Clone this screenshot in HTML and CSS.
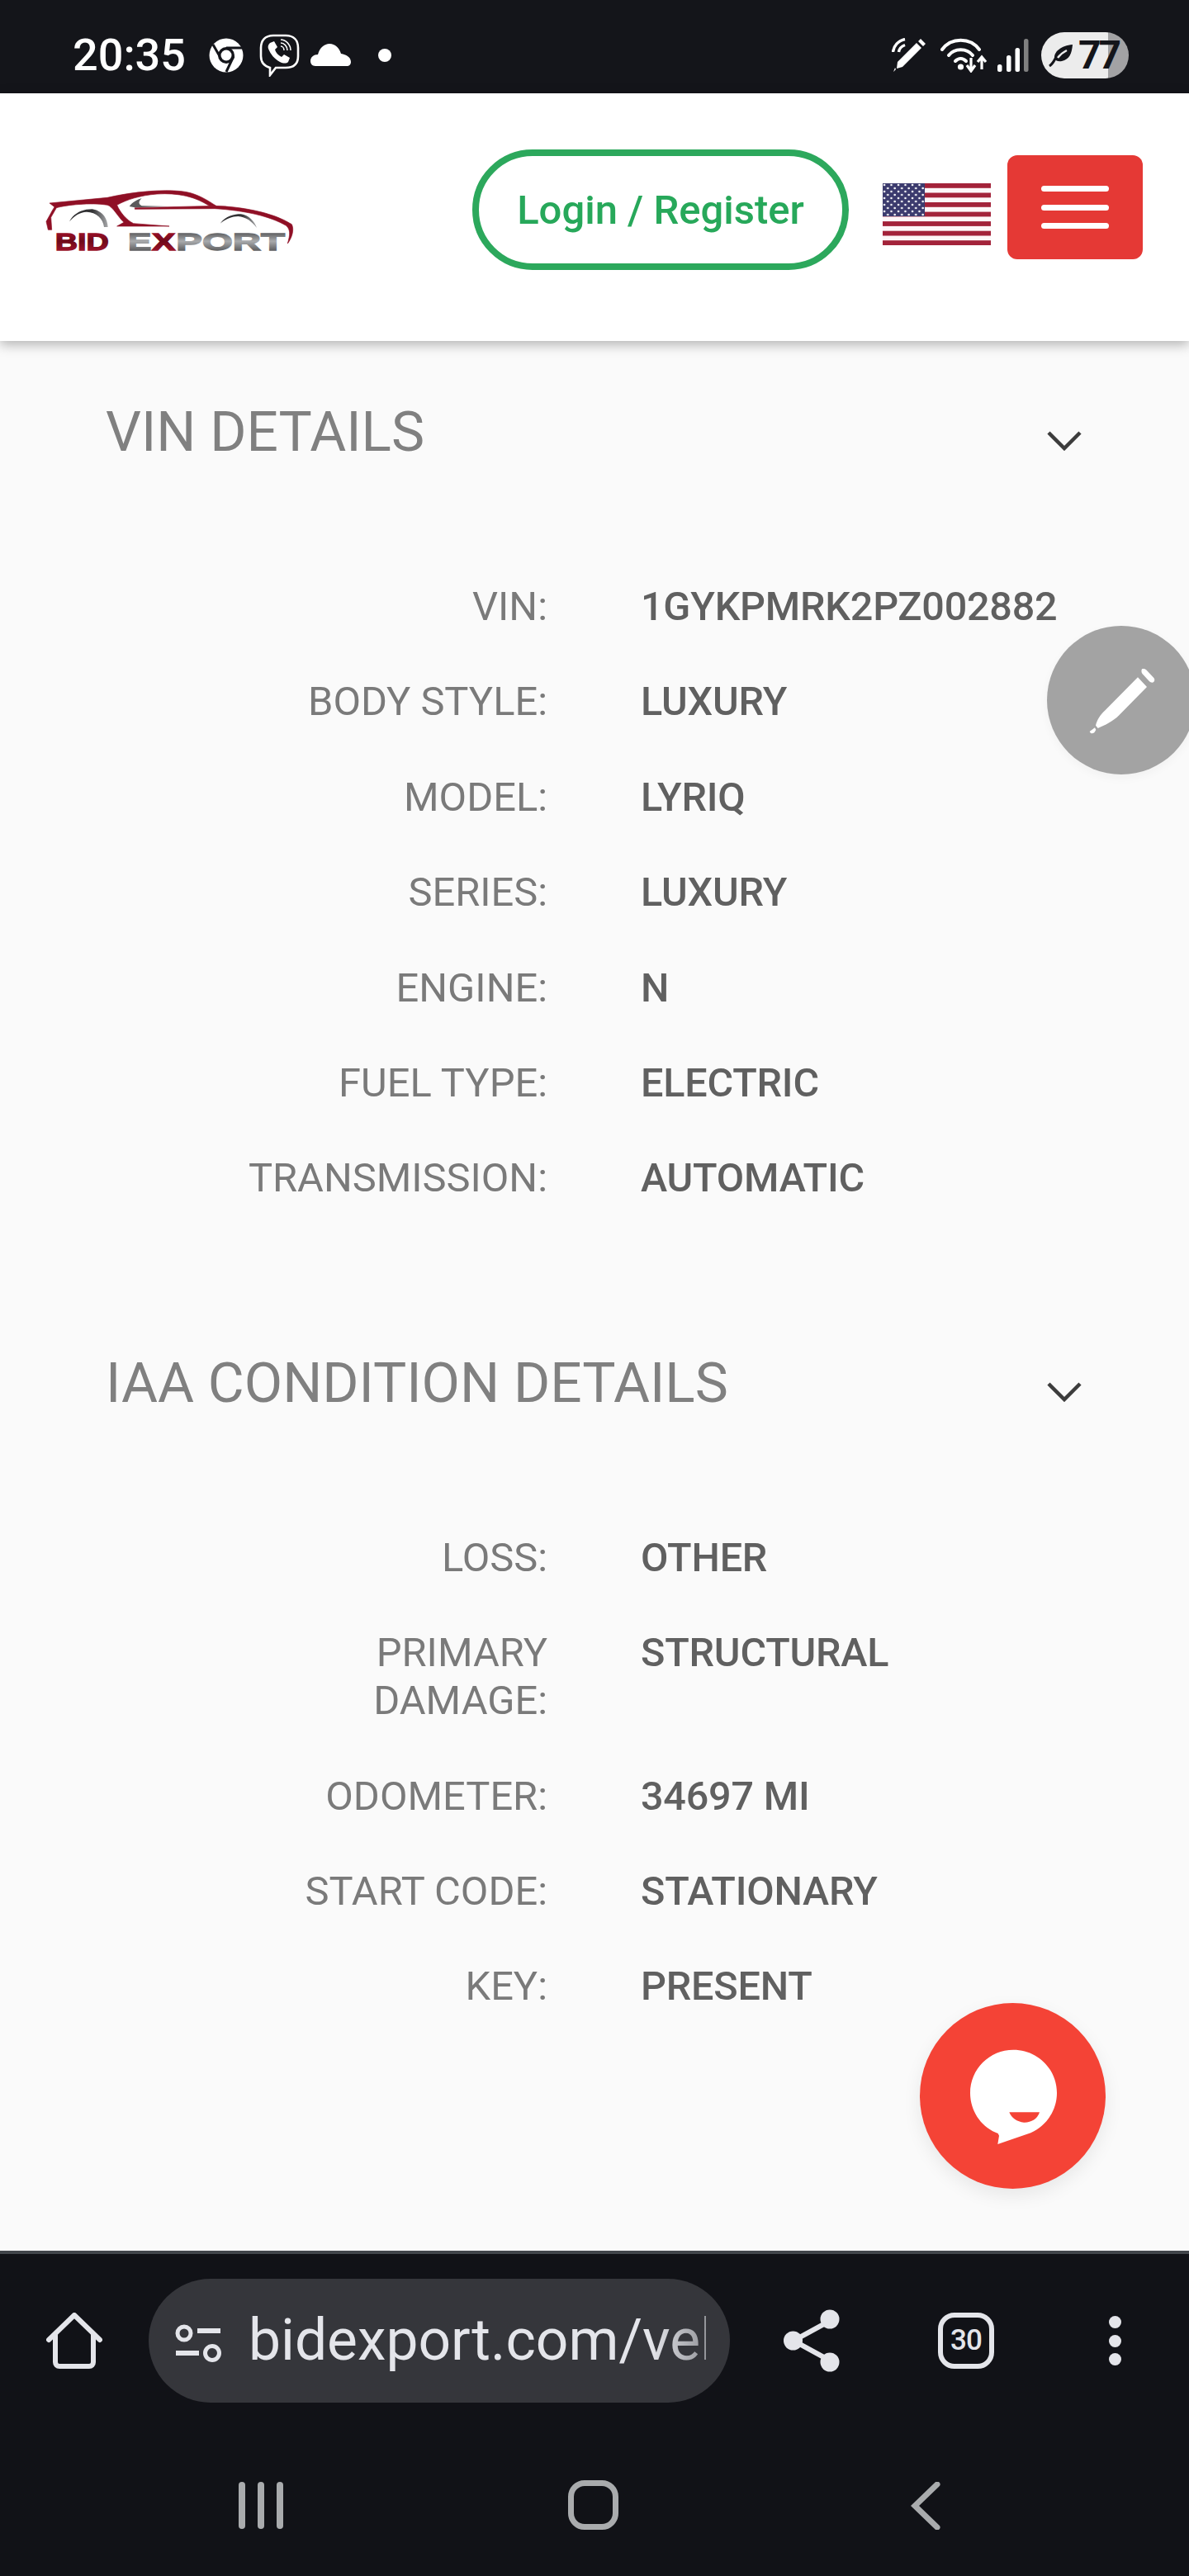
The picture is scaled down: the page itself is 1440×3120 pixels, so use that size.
FILE: index.html
```html
<!DOCTYPE html>
<html lang="en">
<head>
<meta charset="utf-8">
<title>Bid Export</title>
<link rel="stylesheet" href="styles.css">
</head>
<body>
<div class="phone">
  <div class="statusbar">
    <div class="status-left">
      <span class="clock">20:35</span>
      <svg class="ic-chrome" viewBox="0 0 42 42"><circle cx="21" cy="21" r="20.5" fill="#fff"/><circle cx="21" cy="21" r="10" fill="#14151a"/><circle cx="21" cy="21" r="6.500" fill="#fff"/><path d="M5 8 L13 22 M21 12 H42 M30 22 L21 41" stroke="#14151a" stroke-width="3" fill="none"/></svg>
      <svg class="ic-viber" viewBox="0 0 49 52"><path d="M17 2 H32 C42 2 47 8 47 17 V27 C47 36 42 41 32 41 H20 L13 50 V41 C6 39 2 35 2 27 V17 C2 8 7 2 17 2 Z" fill="none" stroke="#fff" stroke-width="2.600"/><path d="M13 11 L18 9 L22 16 L19 19 C20 23 23 26 27 28 L30 25 L37 29 L35 34 C33 36 29 36 25 34 C18 30 14 25 11 18 C10 15 11 13 13 11 Z" fill="#fff"/><path d="M26 7 C32 7 38 13 38 20 M26 11 C30 11 34 15 34 20 M26 15 C28 15 30 17 30 20" fill="none" stroke="#fff" stroke-width="1.500"/></svg>
      <svg class="ic-cloud" viewBox="0 0 49 27"><path d="M6 27 C2 27 0 24 0 21 C0 16 4 13 9 13 C11 5 17 0 23 0 C30 0 35 5 37 12 C43 13 49 16 49 22 C49 25 47 27 44 27 Z" fill="#fff"/></svg>
      <span class="status-dot"></span>
    </div>
    <div class="status-right">
      <svg class="ic-pen" viewBox="0 0 42 42"><path d="M35 1 L41 7 L38 10 L32 4 Z M30 6 L36 12 L13 35 L6 37 L7 29 Z M5 38 L2 41 L4 36 Z" fill="#fff"/><path d="M1.500 17 C2 10 8 3 16 1.500 M8.500 17 C9 13 12 10 16 8.500" fill="none" stroke="#fff" stroke-width="3.400"/></svg>
      <svg class="ic-wifi" viewBox="0 0 58 42"><g fill="none" stroke="#fff" stroke-width="4" stroke-linecap="round"><path d="M2 14 C13 -1 36 -1 47 14"/><path d="M10 21 C17 12 32 12 39 21"/><path d="M18 28 C22 24 27 24 31 28"/></g><circle cx="24.500" cy="35" r="3.600" fill="#fff"/><path d="M37 24 V39 M32 33 L37 40 L42 33 M50 38 V24 M45 29 L50 23 L55 29" fill="none" stroke="#fff" stroke-width="3.200"/></svg>
      <svg class="ic-signal" viewBox="0 0 38 40"><rect x="0" y="31" width="5.500" height="9" rx="2.500" fill="#fff"/><rect x="11" y="20" width="5.500" height="20" rx="2.500" fill="#fff"/><rect x="21.500" y="11" width="5.500" height="29" rx="2.500" fill="#fff"/><rect x="32" y="0" width="5.500" height="40" rx="2.500" fill="#808080"/></svg>
      <div class="battery">
        <svg class="ic-leaf" viewBox="0 0 30 28"><path d="M29 1 C28 12 25 19 16 21 C11 22 8 20 7 18 C6 10 15 2 29 1 Z" fill="#14151a"/><path d="M8 18 C6 22 4 25 1 27" fill="none" stroke="#14151a" stroke-width="3"/><path d="M11 17 C14 13 18 10 22 8" fill="none" stroke="#ececec" stroke-width="2.500"/></svg>
        <span class="battery-level">77</span>
      </div>
    </div>
  </div>

  <header class="site-header">
    <svg class="logo" viewBox="0 0 1020 390">
      <defs>
        <linearGradient id="lg-red" x1="0" y1="0" x2="0" y2="1"><stop offset="0" stop-color="#b5122f"/><stop offset=".5" stop-color="#6e0a1b"/><stop offset="1" stop-color="#b01530"/></linearGradient>
        <linearGradient id="lg-steel" x1="0" y1="0" x2="0" y2="1"><stop offset="0" stop-color="#2f2f31"/><stop offset=".5" stop-color="#a9abad"/><stop offset="1" stop-color="#3c3c3e"/></linearGradient>
        <linearGradient id="lg-arch" x1="0" y1="0" x2="1" y2="0"><stop offset="0" stop-color="#2e2e30"/><stop offset=".6" stop-color="#333335"/><stop offset="1" stop-color="#a8a9ab"/></linearGradient>
      </defs>
      <path class="logo-body" d="M90 138 L300 118 C400 95 500 88 570 95 C620 100 660 125 695 148 L670 148 C620 115 560 100 480 105 C420 110 370 125 335 145 C345 170 370 200 395 212 L525 222 L335 222 L360 208 C340 190 320 150 300 145 C240 135 150 145 115 155 L95 190 L98 235 L85 235 L78 205 L100 165 L108 152 Z"/>
      <path class="logo-body" d="M400 155 L690 148 C780 150 900 170 970 215 C980 235 970 265 955 285 C965 250 965 235 950 220 C890 185 800 165 690 158 L400 160 Z"/>
      <path d="M380 150 C390 135 410 125 425 120 C415 130 410 140 425 148 L520 150 L400 154 Z" fill="#5a5a5c"/>
      <path d="M162 205 C180 170 215 160 245 160 C280 165 300 190 302 225 L288 225 C285 195 260 170 225 170 C200 170 180 185 162 205 Z" fill="url(#lg-arch)"/>
      <path d="M710 212 C730 185 760 178 785 178 C815 182 835 205 843 228 C825 205 805 188 775 186 C755 186 730 195 710 212 Z" fill="url(#lg-arch)"/>
      <text class="logo-word" x="110" y="308" textLength="195" lengthAdjust="spacingAndGlyphs" fill="url(#lg-red)" stroke="url(#lg-red)">BID</text>
      <text class="logo-word" x="375" y="308" textLength="85" lengthAdjust="spacingAndGlyphs" fill="url(#lg-steel)" stroke="url(#lg-steel)">E</text>
      <text class="logo-word" x="462" y="308" textLength="85" lengthAdjust="spacingAndGlyphs" fill="url(#lg-red)" stroke="url(#lg-red)">X</text>
      <text class="logo-word" x="550" y="308" textLength="395" lengthAdjust="spacingAndGlyphs" fill="url(#lg-steel)" stroke="url(#lg-steel)">PORT</text>
    </svg>
    <a class="login-btn">Login / Register</a>
    <svg class="flag" viewBox="0 0 131 75">
      <defs><pattern id="stars" x="0" y="0" width="8.500" height="8" patternUnits="userSpaceOnUse"><circle cx="2" cy="2" r="1.300" fill="#fff"/><circle cx="6.200" cy="6" r="1.300" fill="#fff"/></pattern></defs>
      <rect width="131" height="75" fill="#fdf7f8"/>
      <rect y="0" width="131" height="5.800" fill="#a3233a"/><rect y="11.500" width="131" height="5.800" fill="#a3233a"/><rect y="23" width="131" height="5.800" fill="#a3233a"/><rect y="34.600" width="131" height="5.800" fill="#a3233a"/><rect y="46.100" width="131" height="5.800" fill="#a3233a"/><rect y="57.700" width="131" height="5.800" fill="#a3233a"/><rect y="69.200" width="131" height="5.800" fill="#a3233a"/>
      <rect width="51" height="40" fill="#3c3b6e"/><rect width="51" height="40" fill="url(#stars)"/>
    </svg>
    <button class="menu-btn" type="button"><span></span><span></span><span></span></button>
  </header>

  <main class="content">
    <section class="panel">
      <div class="panel-head">
        <h2>VIN DETAILS</h2>
        <svg class="chevron" viewBox="0 0 42 25"><path d="M2 3 L21 22 L40 3" fill="none" stroke="#3c3c3c" stroke-width="4.500"/></svg>
      </div>
      <dl class="facts">
        <dt>VIN:</dt><dd>1GYKPMRK2PZ002882</dd>
        <dt>BODY STYLE:</dt><dd>LUXURY</dd>
        <dt>MODEL:</dt><dd>LYRIQ</dd>
        <dt>SERIES:</dt><dd>LUXURY</dd>
        <dt>ENGINE:</dt><dd>N</dd>
        <dt>FUEL TYPE:</dt><dd>ELECTRIC</dd>
        <dt>TRANSMISSION:</dt><dd>AUTOMATIC</dd>
      </dl>
    </section>
    <section class="panel">
      <div class="panel-head">
        <h2>IAA CONDITION DETAILS</h2>
        <svg class="chevron" viewBox="0 0 42 25"><path d="M2 3 L21 22 L40 3" fill="none" stroke="#3c3c3c" stroke-width="4.500"/></svg>
      </div>
      <dl class="facts">
        <dt>LOSS:</dt><dd>OTHER</dd>
        <dt>PRIMARY DAMAGE:</dt><dd>STRUCTURAL</dd>
        <dt>ODOMETER:</dt><dd>34697 MI</dd>
        <dt>START CODE:</dt><dd>STATIONARY</dd>
        <dt>KEY:</dt><dd>PRESENT</dd>
      </dl>
    </section>
    <button class="fab-edit" type="button">
      <svg viewBox="0 0 540 540"><path d="M330 187 L363 222 L262 325 C240 347 210 362 185 372 L177 362 C182 340 195 322 210 308 Z M345 157 C352 155 358 157 362 161 L388 189 C392 194 392 200 387 205 C382 207 376 206 372 202 L347 175 C343 170 342 163 345 157 Z M174 370 L155 384 C158 392 165 393 172 388 L178 378 Z" fill="#fff"/></svg>
    </button>
    <button class="fab-chat" type="button">
      <svg viewBox="162 138 675 675"><path d="M502 308 C590 308 660 378 660 465 C660 530 620 585 565 610 L445 651 L450 620 L446 612 C385 590 345 530 345 465 C345 378 415 308 502 308 Z" fill="#fff"/><path d="M487 535 L597 535 C590 560 565 573 540 572 C515 570 495 555 487 535 Z" fill="#f44336"/></svg>
    </button>
  </main>

  <div class="browser-bar">
    <svg class="ic-home" viewBox="0 0 68 68"><path d="M3 33 L34 3 L65 33 M11 26 V60 C11 63 13 65 16 65 H52 C55 65 57 63 57 60 V26" fill="none" stroke="#e4e5ea" stroke-width="6" stroke-linecap="round" stroke-linejoin="round"/></svg>
    <div class="url-pill">
      <svg class="ic-tune" viewBox="0 0 57 46"><circle cx="11" cy="11" r="8" fill="none" stroke="#e4e5ea" stroke-width="5"/><path d="M27 8 H55 M1 35 H29" stroke="#e4e5ea" stroke-width="6"/><circle cx="45" cy="35" r="8.500" fill="none" stroke="#e4e5ea" stroke-width="5"/></svg>
      <span class="url-text">bidexport.com/vehicle</span>
    </div>
    <svg class="ic-share" viewBox="0 0 68 76"><path d="M56 14 L12 38 L56 62" fill="none" stroke="#e4e5ea" stroke-width="6"/><circle cx="56" cy="12" r="11.500" fill="#e4e5ea"/><circle cx="11.500" cy="38" r="11.500" fill="#e4e5ea"/><circle cx="56" cy="64" r="11.500" fill="#e4e5ea"/></svg>
    <div class="tabs-count">30</div>
    <div class="kebab"><span></span><span></span><span></span></div>
  </div>
  <nav class="nav-bar">
    <div class="nav-recent"><span></span><span></span><span></span></div>
    <div class="nav-home"></div>
    <svg class="nav-back" viewBox="0 0 36 58"><path d="M32 3 L5 29 L32 55" fill="none" stroke="#a9abad" stroke-width="7" stroke-linecap="round"/></svg>
  </nav>
</div>
</body>
</html>
```

FILE: styles.css
```css
* { box-sizing: border-box; }
html, body { margin: 0; padding: 0; }
body { font-family: Roboto, "Liberation Sans", sans-serif; background: #fafafa; }
button { border: 0; padding: 0; font: inherit; }

.phone { width: 1440px; height: 3120px; display: flex; flex-direction: column; overflow: hidden; position: relative; }

/* Status bar */
.statusbar { flex: 0 0 113px; background: #14151a; display: flex; justify-content: space-between; align-items: center; padding: 20px 73px 0 88px; color: #fff; }
.status-left, .status-right { display: flex; align-items: center; }
.clock { font-size: 54px; font-weight: 500; line-height: 1; width: 137px; }
.ic-chrome { width: 42px; height: 42px; margin-left: 28px; }
.ic-viber { width: 49px; height: 52px; margin-left: 19px; }
.ic-cloud { width: 49px; height: 27px; margin-left: 13px; margin-top: -1px; }
.status-dot { width: 16px; height: 16px; border-radius: 50%; background: #fff; margin-left: 33px; }
.ic-pen { width: 42px; height: 42px; }
.ic-wifi { width: 58px; height: 42px; margin-left: 17px; }
.ic-signal { width: 38px; height: 40px; margin-left: 11px; }
.battery { width: 106px; height: 56px; margin-left: 15px; border-radius: 28px; background: linear-gradient(90deg, #ececec 0, #ececec 81px, #a2a2a4 81px); display: flex; align-items: center; padding-left: 9px; color: #14151a; }
.ic-leaf { width: 30px; height: 28px; flex: none; }
.battery-level { font-size: 48px; font-weight: 700; line-height: 1; margin-left: 6px; letter-spacing: -3px; }

/* Site header */
.site-header { flex: 0 0 300px; background: #fff; display: flex; align-items: center; box-shadow: 0 4px 14px rgba(0,0,0,.3); position: relative; z-index: 2; }
.logo { width: 340px; height: 130px; margin: 4px 0 0 30px; flex: none; }
.logo-body { fill: #8f0f25; stroke: #8f0f25; stroke-width: 2; }
.logo-word { font-family: "Liberation Sans", sans-serif; font-size: 88px; font-weight: 700; stroke-width: 4; }
.login-btn { margin: 0 0 18px 202px; width: 456px; height: 146px; border: 8px solid #2ca85c; border-radius: 73px; display: flex; align-items: center; justify-content: center; color: #27a85a; font-size: 49px; font-weight: 500; flex: none; }
.flag { width: 131px; height: 75px; margin: 0 0 7px 41px; flex: none; }
.menu-btn { width: 164px; height: 126px; margin: 0 0 24px 20px; background: #e53935; border-radius: 12px; display: flex; flex-direction: column; align-items: center; justify-content: center; gap: 15.500px; flex: none; }
.menu-btn span { width: 82px; height: 7px; border-radius: 3.500px; background: #fff; }

/* Content */
.content { flex: 1; background: #fafafa; padding-top: 72px; position: relative; }
.panel { padding-left: 128px; margin-bottom: 181px; }
.panel-head { display: flex; justify-content: space-between; align-items: center; padding-right: 130px; height: 76px; margin-bottom: 145px; }
.panel-head h2 { margin: 0; font-size: 67.500px; font-weight: 400; line-height: 76px; color: #808080; }
.chevron { width: 42px; height: 25px; margin-top: 20px; flex: none; }
.facts { display: grid; grid-template-columns: 400px 1fr; column-gap: 113px; row-gap: 57.700px; margin: 0 0 0 135px; font-size: 48.800px; line-height: 57.700px; }
.facts dt { text-align: right; color: #7a7a7a; }
.facts dd { margin: 0; font-size: 48.500px; font-weight: 500; letter-spacing: -.2px; color: #606060; }

.fab-edit { position: absolute; left: 1268px; top: 345px; width: 180px; height: 180px; border-radius: 50%; background: #a3a3a3; box-shadow: 0 4px 12px rgba(0,0,0,.04); }
.fab-edit svg { display: block; width: 180px; height: 180px; }
.fab-chat { position: absolute; left: 1114px; top: 2013px; width: 225px; height: 225px; border-radius: 50%; background: #f44336; box-shadow: 0 8px 22px rgba(0,0,0,.08); }
.fab-chat svg { display: block; width: 225px; height: 225px; }

/* Browser toolbar */
.browser-bar { flex: 0 0 238px; background: #111217; border-top: 4px solid #42464b; display: flex; align-items: flex-start; padding-top: 30px; }
.ic-home { width: 68px; height: 68px; margin: 41px 0 0 56px; flex: none; }
.url-pill { width: 704px; height: 150px; margin-left: 56px; background: #35363b; border-radius: 75px; display: flex; align-items: center; padding-left: 32px; flex: none; }
.ic-tune { width: 57px; height: 46px; flex: none; margin-top: 5px; }
.url-text { width: 554px; margin-left: 32px; font-size: 69.500px; line-height: 80px; color: #e4e5ea; white-space: nowrap; overflow: hidden; -webkit-mask-image: linear-gradient(90deg, #000 88%, rgba(0,0,0,.55) 100%); mask-image: linear-gradient(90deg, #000 88%, rgba(0,0,0,.55) 100%); }
.ic-share { width: 68px; height: 76px; margin: 37px 0 0 65px; flex: none; }
.tabs-count { width: 68px; height: 68px; margin: 41px 0 0 119px; border: 6px solid #e4e5ea; border-radius: 20px; color: #e4e5ea; font-size: 35px; font-weight: 500; line-height: 56px; text-align: center; letter-spacing: -1px; flex: none; }
.kebab { margin: 45px 0 0 139px; display: flex; flex-direction: column; gap: 7.500px; flex: none; }
.kebab span { width: 15px; height: 15px; border-radius: 50%; background: #e4e5ea; }

/* Android nav */
.nav-bar { flex: 0 0 156px; background: #111217; display: flex; align-items: flex-start; padding: 40px 0 0 289px; }
.nav-recent { display: flex; gap: 15px; padding-top: 2px; flex: none; }
.nav-recent span { width: 8px; height: 57px; border-radius: 4px; background: #a9abad; }
.nav-home { width: 61px; height: 60px; margin-left: 345px; border: 7px solid #a9abad; border-radius: 20px; flex: none; }
.nav-back { width: 36px; height: 58px; margin: 2px 0 0 354px; flex: none; }
```
